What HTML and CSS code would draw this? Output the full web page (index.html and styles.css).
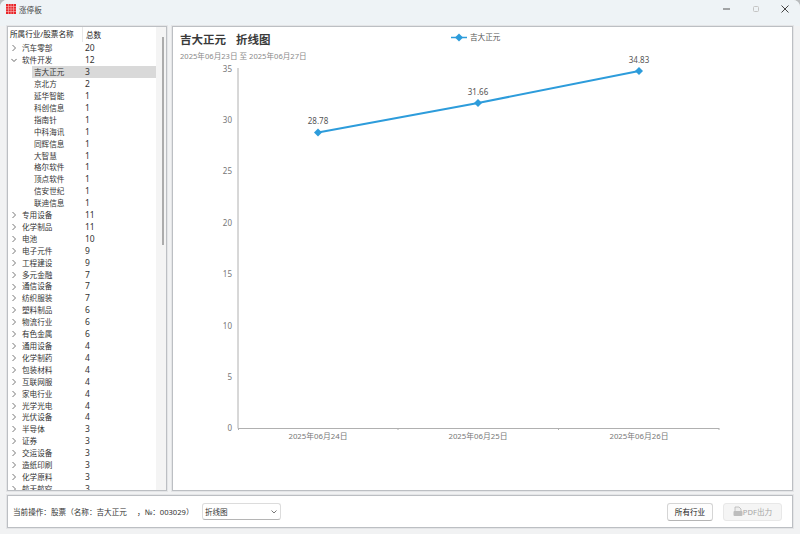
FILE: index.html
```html
<!DOCTYPE html>
<html lang="zh">
<head>
<meta charset="utf-8">
<title>涨停板</title>
<link rel="stylesheet" href="styles.css">
</head>
<body>
<div class="window">
  <header class="titlebar">
    <div class="app">
      <svg class="logo" width="10" height="10" viewBox="0 0 10 10"><path d="M0 0h10v10H0z" fill="#e8262a"/><path d="M2.500 0v10M5 0v10M7.500 0v10M0 2.500h10M0 5h10M0 7.500h10" stroke="#f8b9b9" stroke-width=".6"/></svg>
      <span>涨停板</span>
    </div>
    <div class="controls">
      <svg width="8" height="8" viewBox="0 0 8 8"><path d="M0 4h7" stroke="#555" stroke-width="1"/></svg>
      <svg width="8" height="8" viewBox="0 0 8 8"><rect x="1.500" y="1.500" width="5" height="5" rx="1" fill="none" stroke="#c4c4c4"/></svg>
      <svg width="8" height="8" viewBox="0 0 8 8"><path d="M.5.5l7 7M7.500.5l-7 7" stroke="#444" stroke-width="1"/></svg>
    </div>
  </header>
  <main class="content">
    <section class="tree-panel panel">
      <div class="tree">
        <div class="row head"><span class="name">所属行业/股票名称</span><span class="num">总数</span></div>
        <div class="row"><svg class="chev" width="6" height="8" viewBox="0 0 6 8"><path d="M1.500 1l3 3-3 3" fill="none" stroke="#777"/></svg><span class="name">汽车零部</span><span class="num">20</span></div>
        <div class="row"><svg class="chev" width="6" height="8" viewBox="0 0 8 8"><path d="M.5 2.500l3.500 3.500 3.500-3.500" fill="none" stroke="#333"/></svg><span class="name">软件开发</span><span class="num">12</span></div>
        <div class="row child selected"><span class="name">吉大正元</span><span class="num">3</span></div>
        <div class="row child"><span class="name">京北方</span><span class="num">2</span></div>
        <div class="row child"><span class="name">延华智能</span><span class="num">1</span></div>
        <div class="row child"><span class="name">科创信息</span><span class="num">1</span></div>
        <div class="row child"><span class="name">指南针</span><span class="num">1</span></div>
        <div class="row child"><span class="name">中科海讯</span><span class="num">1</span></div>
        <div class="row child"><span class="name">同辉信息</span><span class="num">1</span></div>
        <div class="row child"><span class="name">大智慧</span><span class="num">1</span></div>
        <div class="row child"><span class="name">格尔软件</span><span class="num">1</span></div>
        <div class="row child"><span class="name">顶点软件</span><span class="num">1</span></div>
        <div class="row child"><span class="name">信安世纪</span><span class="num">1</span></div>
        <div class="row child"><span class="name">联迪信息</span><span class="num">1</span></div>
        <div class="row"><svg class="chev" width="6" height="8" viewBox="0 0 6 8"><path d="M1.500 1l3 3-3 3" fill="none" stroke="#777"/></svg><span class="name">专用设备</span><span class="num">11</span></div>
        <div class="row"><svg class="chev" width="6" height="8" viewBox="0 0 6 8"><path d="M1.500 1l3 3-3 3" fill="none" stroke="#777"/></svg><span class="name">化学制品</span><span class="num">11</span></div>
        <div class="row"><svg class="chev" width="6" height="8" viewBox="0 0 6 8"><path d="M1.500 1l3 3-3 3" fill="none" stroke="#777"/></svg><span class="name">电池</span><span class="num">10</span></div>
        <div class="row"><svg class="chev" width="6" height="8" viewBox="0 0 6 8"><path d="M1.500 1l3 3-3 3" fill="none" stroke="#777"/></svg><span class="name">电子元件</span><span class="num">9</span></div>
        <div class="row"><svg class="chev" width="6" height="8" viewBox="0 0 6 8"><path d="M1.500 1l3 3-3 3" fill="none" stroke="#777"/></svg><span class="name">工程建设</span><span class="num">9</span></div>
        <div class="row"><svg class="chev" width="6" height="8" viewBox="0 0 6 8"><path d="M1.500 1l3 3-3 3" fill="none" stroke="#777"/></svg><span class="name">多元金融</span><span class="num">7</span></div>
        <div class="row"><svg class="chev" width="6" height="8" viewBox="0 0 6 8"><path d="M1.500 1l3 3-3 3" fill="none" stroke="#777"/></svg><span class="name">通信设备</span><span class="num">7</span></div>
        <div class="row"><svg class="chev" width="6" height="8" viewBox="0 0 6 8"><path d="M1.500 1l3 3-3 3" fill="none" stroke="#777"/></svg><span class="name">纺织服装</span><span class="num">7</span></div>
        <div class="row"><svg class="chev" width="6" height="8" viewBox="0 0 6 8"><path d="M1.500 1l3 3-3 3" fill="none" stroke="#777"/></svg><span class="name">塑料制品</span><span class="num">6</span></div>
        <div class="row"><svg class="chev" width="6" height="8" viewBox="0 0 6 8"><path d="M1.500 1l3 3-3 3" fill="none" stroke="#777"/></svg><span class="name">物流行业</span><span class="num">6</span></div>
        <div class="row"><svg class="chev" width="6" height="8" viewBox="0 0 6 8"><path d="M1.500 1l3 3-3 3" fill="none" stroke="#777"/></svg><span class="name">有色金属</span><span class="num">6</span></div>
        <div class="row"><svg class="chev" width="6" height="8" viewBox="0 0 6 8"><path d="M1.500 1l3 3-3 3" fill="none" stroke="#777"/></svg><span class="name">通用设备</span><span class="num">4</span></div>
        <div class="row"><svg class="chev" width="6" height="8" viewBox="0 0 6 8"><path d="M1.500 1l3 3-3 3" fill="none" stroke="#777"/></svg><span class="name">化学制药</span><span class="num">4</span></div>
        <div class="row"><svg class="chev" width="6" height="8" viewBox="0 0 6 8"><path d="M1.500 1l3 3-3 3" fill="none" stroke="#777"/></svg><span class="name">包装材料</span><span class="num">4</span></div>
        <div class="row"><svg class="chev" width="6" height="8" viewBox="0 0 6 8"><path d="M1.500 1l3 3-3 3" fill="none" stroke="#777"/></svg><span class="name">互联网服</span><span class="num">4</span></div>
        <div class="row"><svg class="chev" width="6" height="8" viewBox="0 0 6 8"><path d="M1.500 1l3 3-3 3" fill="none" stroke="#777"/></svg><span class="name">家电行业</span><span class="num">4</span></div>
        <div class="row"><svg class="chev" width="6" height="8" viewBox="0 0 6 8"><path d="M1.500 1l3 3-3 3" fill="none" stroke="#777"/></svg><span class="name">光学光电</span><span class="num">4</span></div>
        <div class="row"><svg class="chev" width="6" height="8" viewBox="0 0 6 8"><path d="M1.500 1l3 3-3 3" fill="none" stroke="#777"/></svg><span class="name">光伏设备</span><span class="num">4</span></div>
        <div class="row"><svg class="chev" width="6" height="8" viewBox="0 0 6 8"><path d="M1.500 1l3 3-3 3" fill="none" stroke="#777"/></svg><span class="name">半导体</span><span class="num">3</span></div>
        <div class="row"><svg class="chev" width="6" height="8" viewBox="0 0 6 8"><path d="M1.500 1l3 3-3 3" fill="none" stroke="#777"/></svg><span class="name">证券</span><span class="num">3</span></div>
        <div class="row"><svg class="chev" width="6" height="8" viewBox="0 0 6 8"><path d="M1.500 1l3 3-3 3" fill="none" stroke="#777"/></svg><span class="name">交运设备</span><span class="num">3</span></div>
        <div class="row"><svg class="chev" width="6" height="8" viewBox="0 0 6 8"><path d="M1.500 1l3 3-3 3" fill="none" stroke="#777"/></svg><span class="name">造纸印刷</span><span class="num">3</span></div>
        <div class="row"><svg class="chev" width="6" height="8" viewBox="0 0 6 8"><path d="M1.500 1l3 3-3 3" fill="none" stroke="#777"/></svg><span class="name">化学原料</span><span class="num">3</span></div>
        <div class="row"><svg class="chev" width="6" height="8" viewBox="0 0 6 8"><path d="M1.500 1l3 3-3 3" fill="none" stroke="#777"/></svg><span class="name">航天航空</span><span class="num">3</span></div>
      </div>
      <div class="scrollbar"><div class="thumb"></div></div>
    </section>
    <section class="chart-panel panel">
      <svg class="chart" width="620" height="463" viewBox="173 27 620 463">
        <text class="c-title" x="180" y="44">吉大正元</text>
        <text class="c-title" x="236" y="44">折线图</text>
        <text class="c-sub" x="180" y="59">2025年06月23日 至 2025年06月27日</text>
        <path d="M451 37.500h16" stroke="#2d9cdb" stroke-width="1.500"/>
        <path d="M459 33.500l4 4-4 4-4-4z" fill="#2d9cdb"/>
        <text class="c-legend" x="470" y="40">吉大正元</text>
        <path d="M238 68v360.500H719M238.500 428v2M398 428v2M558.500 428v2M719 428v2" fill="none" stroke="#b0b0b0"/>
        <g class="c-y">
          <text x="232" y="72">35</text><text x="232" y="123">30</text><text x="232" y="174">25</text><text x="232" y="226">20</text>
          <text x="232" y="277">15</text><text x="232" y="329">10</text><text x="232" y="380">5</text><text x="232" y="431">0</text>
        </g>
        <g class="c-x">
          <text x="318" y="439">2025年06月24日</text><text x="478" y="439">2025年06月25日</text><text x="639" y="439">2025年06月26日</text>
        </g>
        <path d="M318 132.500L478 103 639 71" fill="none" stroke="#2d9cdb" stroke-width="2"/>
        <path d="M318 128.500l4 4-4 4-4-4zM478 99l4 4-4 4-4-4zM639 67l4 4-4 4-4-4z" fill="#2d9cdb"/>
        <g class="c-val">
          <text x="318" y="124">28.78</text><text x="478" y="95">31.66</text><text x="639" y="63">34.83</text>
        </g>
      </svg>
    </section>
  </main>
  <footer class="bottom panel">
    <span class="status">当前操作：股票（名称：吉大正元</span>
    <span class="status id">，№：003029）</span>
    <div class="select"><span>折线图</span><svg width="6" height="4" viewBox="0 0 6 4"><path d="M.5.500l2.500 2.500 2.500-2.500" fill="none" stroke="#777"/></svg></div>
    <div class="spacer"></div>
    <button class="btn">所有行业</button>
    <button class="btn disabled"><svg width="10" height="11" viewBox="0 0 10 11"><path d="M2 1h4l2 2v3H2z" fill="#eee" stroke="#b5b5b5" stroke-width=".8"/><rect x=".5" y="5" width="9" height="5" rx="1" fill="#bdbdbd"/></svg>PDF出力</button>
  </footer>
</div>
</body>
</html>
```

FILE: styles.css
```css
* { box-sizing: border-box; }
html, body { margin: 0; height: 100%; background: #b9bcbe; }
body { width: 800px; height: 534px; overflow: hidden; font-family: "Noto Sans", "Noto Sans CJK SC", sans-serif; font-size: 7.600px; color: #333; }
.window { width: 800px; height: 534px; display: flex; flex-direction: column; background: #f1f2f3; border-radius: 7px 7px 0 0; padding: 0 7px 6px; }
.titlebar { height: 26px; margin: 0 -7px; padding: 0 11px 8px 6px; display: flex; align-items: center; justify-content: space-between; background: #eef3f6; border-radius: 7px 7px 0 0; flex: none; }
.app { display: flex; align-items: center; gap: 3px; color: #444; }
.controls { display: flex; gap: 21px; align-items: center; }
.panel { background: #fff; border: 1px solid #bcbfc3; box-shadow: 0 0 0 1px #e4e5e7; }
.content { flex: 1; min-height: 0; display: flex; gap: 5px; }
.tree-panel { width: 160px; display: flex; overflow: hidden; }
.tree { width: 148px; flex: none; overflow: hidden; }
.row { height: 11.920px; display: flex; align-items: center; position: relative; padding-left: 14px; line-height: 12px; white-space: nowrap; }
.head { height: 15.400px; padding-left: 2px; color: #222; }
.head .name { width: 73px; height: 15px; line-height: 15px; border-right: 1px solid #e8e8e8; }
.head .num { margin-left: 3px; }
.name { width: 63px; }
.num { font-size: 8.500px; }
.head .num { font-size: 7.600px; }
.chev { position: absolute; left: 3px; top: 2px; }
.child { padding-left: 26px; }
.child .name { width: 51px; }
.selected::before { content: ""; position: absolute; left: 24px; right: 0; top: 0; bottom: 0; background: #d9d9d9; }
.selected span { position: relative; }
.scrollbar { flex: 1; background: #f4f4f4; padding: 10px 0 0 6px; }
.thumb { width: 2px; height: 208px; background: #acacac; }
.chart-panel { flex: 1; min-width: 0; }
.chart { display: block; font-family: "Noto Sans", "Noto Sans CJK SC", sans-serif; }
.c-title { font-size: 11.500px; font-weight: 700; fill: #3a3a3a; }
.c-sub { font-size: 7.600px; fill: #8a8a8a; }
.c-legend { font-size: 7.600px; fill: #555; }
.c-y text { font-size: 8px; fill: #777; text-anchor: end; }
.c-x text { font-size: 7.800px; fill: #777; text-anchor: middle; }
.c-val text { font-size: 8px; fill: #555; text-anchor: middle; }
.bottom { flex: none; height: 33px; margin-top: 4px; display: flex; align-items: center; padding: 0 10px 0 5px; }
.status { white-space: nowrap; color: #333; }
.status.id { margin-left: 10px; width: 65px; }
.select { width: 79px; height: 17px; border: 1px solid #dcdcdc; border-bottom-color: #b5b5b5; border-radius: 3px; display: flex; align-items: center; justify-content: space-between; padding: 0 3px 0 2px; }
.spacer { flex: 1; }
.btn { width: 46px; height: 18px; padding: 0; border: 1px solid #d5d5d5; border-bottom-color: #b5b5b5; border-radius: 3px; background: #fdfdfd; font: inherit; color: #222; margin-left: 10px; display: flex; align-items: center; justify-content: center; }
.btn.disabled { width: 59px; background: #f5f5f5; border-color: #e8e8e8; color: #a5a5a5; }
```
